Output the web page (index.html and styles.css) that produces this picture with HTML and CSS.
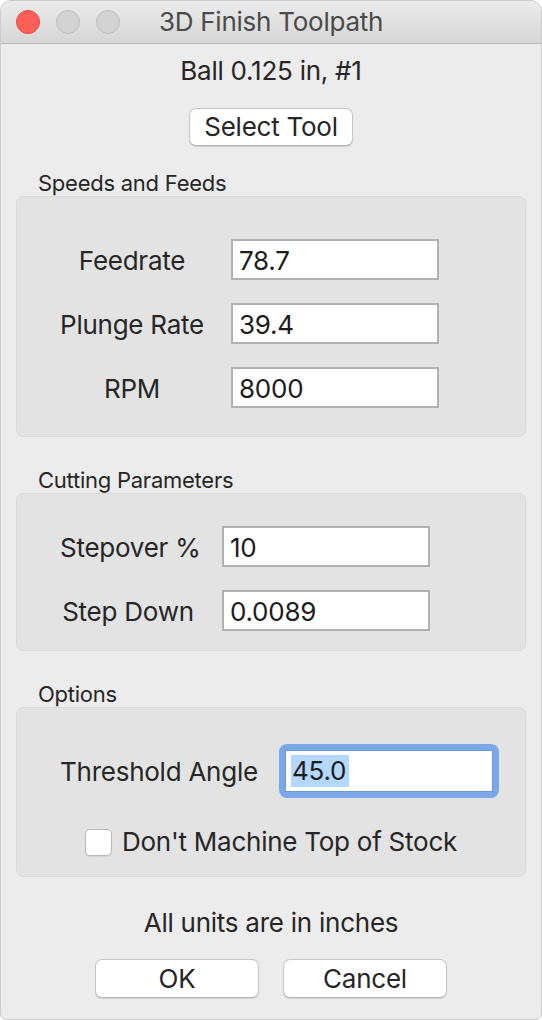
FILE: index.html
```html
<!DOCTYPE html>
<html lang="en">
<head>
<meta charset="utf-8">
<title>3D Finish Toolpath</title>
<link rel="stylesheet" href="styles.css">
</head>
<body>
<div class="window">
  <header class="titlebar">
    <div class="lights">
      <span class="light light-close"></span>
      <span class="light"></span>
      <span class="light"></span>
    </div>
    <div class="title">3D Finish Toolpath</div>
    <div class="titlebar-spacer"></div>
  </header>

  <main class="content">
    <p class="tool-name">Ball 0.125 in, #1</p>
    <div class="center-row"><button class="btn btn-select">Select Tool</button></div>

    <section class="group group-speeds">
      <h2 class="group-title">Speeds and Feeds</h2>
      <div class="group-box box-speeds">
        <div class="form-grid grid-speeds">
          <span class="field-label">Feedrate</span><div class="field">78.7</div>
          <span class="field-label">Plunge Rate</span><div class="field">39.4</div>
          <span class="field-label">RPM</span><div class="field">8000</div>
        </div>
      </div>
    </section>

    <section class="group">
      <h2 class="group-title">Cutting Parameters</h2>
      <div class="group-box box-cutting">
        <div class="form-grid grid-cutting">
          <span class="field-label">Stepover %</span><div class="field">10</div>
          <span class="field-label">Step Down</span><div class="field">0.0089</div>
        </div>
      </div>
    </section>

    <section class="group">
      <h2 class="group-title">Options</h2>
      <div class="group-box box-options">
        <div class="form-grid grid-options">
          <span class="field-label">Threshold Angle</span>
          <div class="focus-ring"><div class="field field-focused"><span class="selection">45.0</span></div></div>
        </div>
        <div class="check-row">
          <span class="checkbox"></span>
          <span class="check-label">Don't Machine Top of Stock</span>
        </div>
      </div>
    </section>

    <p class="units-note">All units are in inches</p>
    <div class="actions">
      <button class="btn btn-action">OK</button>
      <button class="btn btn-action">Cancel</button>
    </div>
  </main>
</div>
</body>
</html>
```

FILE: styles.css
```css
* { box-sizing: border-box; }

html, body {
  margin: 0;
  padding: 0;
  background: #ffffff;
}

body {
  font-family: Inter, "Liberation Sans", Arial, sans-serif;
  color: #262626;
  letter-spacing: -0.25px;
}

.window {
  width: 542px;
  height: 1020px;
  background: #ececec;
  border: 1px solid #cdcdcd;
  border-radius: 11px 11px 6px 6px;
  overflow: hidden;
}

.titlebar {
  height: 43px;
  display: grid;
  grid-template-columns: 1fr auto 1fr;
  align-items: center;
  background: linear-gradient(#ebebeb, #d6d6d6);
  border-bottom: 1px solid #b9b9b9;
}

.lights {
  display: flex;
  gap: 16px;
  padding-left: 15px;
}

.light {
  width: 24px;
  height: 24px;
  border-radius: 50%;
  background: #d3d3d3;
  border: 1px solid #bcbcbc;
}

.light-close {
  background: #fe5f57;
  border-color: #e1483f;
}

.title {
  font-size: 26px;
  line-height: 42px;
  color: #4a4a4a;
}

.content {
  padding: 0 15px;
}

.tool-name {
  margin: 12px 0 0;
  font-size: 26px;
  line-height: 30px;
  text-align: center;
}

.center-row {
  display: flex;
  justify-content: center;
  margin-top: 22px;
}

.btn {
  font-family: inherit;
  font-size: 26px;
  letter-spacing: -0.25px;
  color: #262626;
  background: #ffffff;
  border: 1px solid #c6c6c6;
  border-bottom-color: #b6b6b6;
  border-radius: 7px;
  box-shadow: 0 1px 1px rgba(0, 0, 0, 0.12);
  padding: 0;
  margin: 0;
}

.btn-select {
  width: 164px;
  height: 38px;
  line-height: 36px;
}

.group {
  margin-top: 30px;
}

.group-speeds {
  margin-top: 24px;
}

.group-title {
  margin: 0;
  padding-left: 22px;
  font-size: 22px;
  font-weight: normal;
  line-height: 26px;
}

.group-box {
  background: #e3e3e3;
  border: 1px solid #dadada;
  border-radius: 7px;
  padding-left: 43px;
}

.box-speeds { padding-top: 42px; padding-bottom: 28px; }
.box-cutting { padding-top: 32px; padding-bottom: 19px; }
.box-options { padding-top: 42px; padding-bottom: 19px; padding-left: 0; }

.form-grid {
  display: grid;
  row-gap: 23px;
  align-items: center;
}

.grid-speeds { grid-template-columns: 144px 208px; column-gap: 27px; }
.grid-cutting { grid-template-columns: 136px 208px; column-gap: 26px; }
.grid-options { grid-template-columns: 197px 208px; column-gap: 28px; padding-left: 43px; }

.field-label {
  font-size: 26px;
  line-height: 30px;
  padding-top: 2px;
  text-align: center;
  white-space: nowrap;
}

.field {
  height: 41px;
  background: #ffffff;
  border: 2px solid #b1b1b1;
  padding: 1px 6px 0;
  font-size: 26px;
  line-height: 37px;
  color: #1c1c1c;
  white-space: nowrap;
}

.focus-ring {
  margin: -6px;
  padding: 6px;
  background: #7ca8ea;
  border-radius: 8px;
}

.field-focused {
  height: 42px;
  border: 1px solid #6b97dd;
  padding: 4px 5px 0;
  line-height: 32px;
}

.selection {
  display: inline-block;
  background: #b4d7fe;
  padding: 0 3px 0 1px;
  line-height: 32px;
}

.check-row {
  margin-top: 35px;
  height: 30px;
  display: flex;
  align-items: center;
  justify-content: center;
  gap: 10px;
}

.checkbox {
  width: 27px;
  height: 27px;
  background: #ffffff;
  border: 1px solid #b9b9b9;
  border-radius: 5px;
  box-shadow: 0 1px 1px rgba(0, 0, 0, 0.08);
}

.check-label {
  font-size: 26px;
  line-height: 30px;
}

.units-note {
  margin: 31px 0 0;
  font-size: 26px;
  line-height: 30px;
  text-align: center;
}

.actions {
  margin-top: 21px;
  display: flex;
  justify-content: center;
  gap: 24px;
}

.btn-action {
  width: 164px;
  height: 39px;
  line-height: 37px;
}
```
